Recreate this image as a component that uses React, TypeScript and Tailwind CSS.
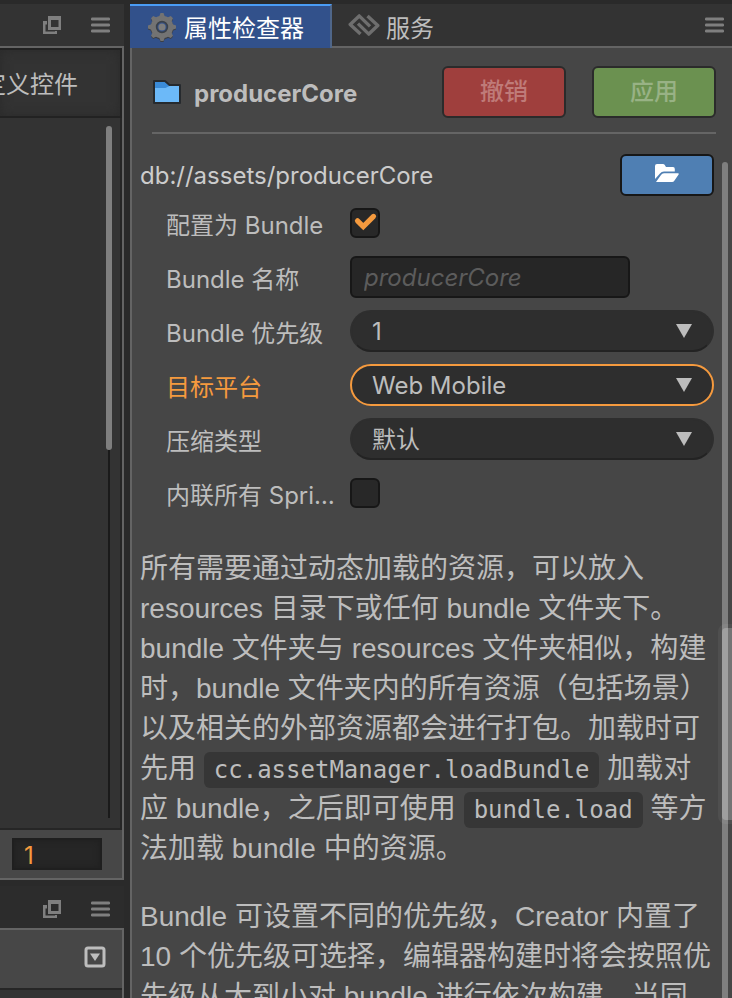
import { useState } from "react";
import type { ReactNode } from "react";

const PRIORITIES = ["1", "2", "3", "4", "5", "6", "7", "8", "9", "10"];
const PLATFORMS = ["Web Mobile", "Web Desktop", "Android", "iOS"];
const COMPRESSION = ["默认", "无压缩", "合并依赖", "Zip"];

export default function App() {
  return (
    <div className="flex h-screen overflow-hidden bg-[#2a2a2a] pt-1 font-['Inter','Noto_Sans_CJK_SC',sans-serif] text-2xl text-[#bdbdbd]">
      <LeftColumn />
      <Inspector />
    </div>
  );
}

function LeftColumn() {
  const [count, setCount] = useState("1");

  return (
    <aside className="mr-1.5 flex w-[124px] shrink-0 flex-col gap-1.5">
      <section className="flex min-h-0 flex-1 flex-col">
        <PanelBar />
        <div className="flex min-h-0 flex-1 flex-col border-r-2 border-b-2 border-[#646464] bg-[#333]">
          <div className="flex h-[70px] shrink-0 items-center justify-end overflow-hidden border-2 border-l-0 border-[#222] pt-1 pr-[42px] whitespace-nowrap shadow-[inset_0_0_12px_#2a2a2a]">
            自定义控件
          </div>
          <div className="flex min-h-0 flex-1 justify-end border-r-2 border-b-2 border-[#262626] pt-2 pr-2 pb-2.5">
            <div className="flex w-1.5 flex-col items-center">
              <div className="h-[324px] w-1.5 shrink-0 rounded-sm bg-[#7f7f7f]" />
              <div className="w-0.5 flex-1 bg-[#1a1a1a]" />
            </div>
          </div>
          <div className="flex h-12 shrink-0 items-center bg-[#474747] px-3">
            <input
              aria-label="数量"
              value={count}
              onChange={(e) => setCount(e.target.value)}
              className="h-8 w-[90px] border-2 border-[#1f1f1f] bg-[#262626] px-2.5 pt-1 text-[#f59a3e] shadow-[inset_0_0_6px_#1f1f1f] outline-none"
            />
          </div>
        </div>
      </section>

      <section className="flex h-28 shrink-0 flex-col">
        <PanelBar dark />
        <div className="flex flex-1 flex-col border-r-2 border-[#646464] bg-[#333]">
          <div className="flex h-[60px] shrink-0 items-center justify-end border-b-2 border-[#262626] bg-[#474747] pr-4 pb-1">
            <button aria-label="展开">
              <DropIcon />
            </button>
          </div>
        </div>
      </section>
    </aside>
  );
}

function PanelBar({ dark = false }: { dark?: boolean }) {
  return (
    <div
      className={`flex h-11 shrink-0 items-center justify-end gap-[30px] border-b-2 border-[#646464] pr-3.5 ${
        dark ? "bg-[#2c2c2c] pt-1" : "bg-[#333]"
      }`}
    >
      <button aria-label="弹出">
        <PopupIcon />
      </button>
      <button aria-label="菜单">
        <MenuIcon />
      </button>
    </div>
  );
}

function Inspector() {
  const [isBundle, setIsBundle] = useState(true);
  const [name, setName] = useState("");
  const [priority, setPriority] = useState("1");
  const [platform, setPlatform] = useState("Web Mobile");
  const [compression, setCompression] = useState("默认");
  const [inlineFrames, setInlineFrames] = useState(false);

  return (
    <main className="relative flex min-w-0 flex-1 flex-col bg-[#464646]">
      <nav className="flex h-11 shrink-0 bg-[#333]">
        <button className="flex h-11 items-center gap-2 border-t-2 border-r-2 border-t-[#4a9cf5] border-r-[#4f6689] bg-[#32518b] pr-[26px] pl-[18px] text-white">
          <GearIcon />
          <span className="pt-1">属性检查器</span>
        </button>
        <div className="flex flex-1 items-center border-b-2 border-[#646464] pr-2 pl-4">
          <button className="flex items-center gap-1.5">
            <ServiceIcon />
            <span className="pt-2">服务</span>
          </button>
          <button aria-label="菜单" className="ml-auto">
            <MenuIcon />
          </button>
        </div>
      </nav>

      <div className="flex min-h-0 flex-1 flex-col border-l-2 border-[#646464]">
        <header className="mr-4 ml-5 flex h-[86px] shrink-0 items-center border-b-2 border-[#656565] pt-1">
          <FolderIcon />
          <h1 className="ml-3 flex-1 pt-1 font-bold">producerCore</h1>
          <button
            disabled
            className="mr-[26px] h-[52px] w-[124px] rounded-md border-2 border-[#2b2b2b] bg-[#9f3f3d] font-medium text-[#bf7b79]"
          >
            撤销
          </button>
          <button
            disabled
            className="h-[52px] w-[124px] rounded-md border-2 border-[#2b2b2b] bg-[#6b9150] font-medium text-[#98b285]"
          >
            应用
          </button>
        </header>

        <div className="min-h-0 flex-1 overflow-hidden pt-5 pr-[18px] pl-2">
          <div className="flex h-[42px] items-center justify-between">
            <span className="pt-0.5 text-[#cccccc]">db://assets/producerCore</span>
            <button
              aria-label="打开文件夹"
              className="flex h-[42px] w-[94px] items-center justify-center rounded-md border-2 border-[#171717] bg-[#4f7fb3] pb-1"
            >
              <FolderOpenIcon />
            </button>
          </div>

          <form>
            <Row id="is-bundle" label="配置为 Bundle">
              <Checkbox id="is-bundle" checked={isBundle} onChange={setIsBundle} />
            </Row>
            <Row id="bundle-name" label="Bundle 名称">
              <input
                id="bundle-name"
                value={name}
                onChange={(e) => setName(e.target.value)}
                placeholder="producerCore"
                className="h-[42px] w-[280px] rounded-md border-2 border-[#171717] bg-[#262626] px-3 outline-none placeholder:text-[#5c5c5c] placeholder:italic"
              />
            </Row>
            <Row id="priority" label="Bundle 优先级">
              <Select id="priority" value={priority} options={PRIORITIES} onChange={setPriority} />
            </Row>
            <Row id="platform" label="目标平台" active>
              <Select id="platform" value={platform} options={PLATFORMS} onChange={setPlatform} active />
            </Row>
            <Row id="compression" label="压缩类型">
              <Select id="compression" value={compression} options={COMPRESSION} onChange={setCompression} />
            </Row>
            <Row id="inline-frames" label="内联所有 SpriteFrame">
              <Checkbox id="inline-frames" checked={inlineFrames} onChange={setInlineFrames} />
            </Row>
          </form>

          <div className="mt-[29px] space-y-7 font-['Liberation_Sans','Noto_Sans_CJK_SC',sans-serif] text-[28px] leading-10">
            <p>
              所有需要通过动态加载的资源，可以放入 resources 目录下或任何 bundle 文件夹下。bundle
              文件夹与 resources 文件夹相似，构建时，bundle
              文件夹内的所有资源（包括场景）以及相关的外部资源都会进行打包。加载时可先用{" "}
              <Code>cc.assetManager.loadBundle</Code> 加载对应 bundle，之后即可使用{" "}
              <Code>bundle.load</Code> 等方法加载 bundle 中的资源。
            </p>
            <p>
              Bundle 可设置不同的优先级，Creator 内置了 10
              个优先级可选择，编辑器构建时将会按照优先级从大到小对 bundle 进行依次构建。当同
            </p>
          </div>
        </div>
      </div>

      {/* scroll thumbs, the window's own one is translucent */}
      <div className="absolute top-[158px] right-1 bottom-0 w-1.5 rounded-t-sm bg-[#7f7f7f]" />
      <div className="absolute top-[620px] right-0 h-[200px] w-3.5 rounded-l-lg border-4 border-r-0 border-white/5 bg-white/25 bg-clip-padding" />
    </main>
  );
}

interface RowProps {
  id: string;
  label: string;
  active?: boolean;
  children: ReactNode;
}

function Row({ id, label, active = false, children }: RowProps) {
  return (
    <div className="flex h-[54px] items-center pl-[26px]">
      <label
        htmlFor={id}
        className={`w-[184px] shrink-0 truncate pt-1.5 pr-3 ${active ? "text-[#f59a3e]" : ""}`}
      >
        {label}
      </label>
      {children}
    </div>
  );
}

interface SelectProps {
  id: string;
  value: string;
  options: string[];
  onChange: (value: string) => void;
  active?: boolean;
}

function Select({ id, value, options, onChange, active = false }: SelectProps) {
  return (
    <div className="relative min-w-0 flex-1">
      <select
        id={id}
        value={value}
        onChange={(e) => onChange(e.target.value)}
        className={`block h-[42px] w-full appearance-none rounded-full border-2 bg-[#2e2e2e] pt-0.5 pr-12 pl-5 outline-none ${
          active ? "border-[#f59a3e]" : "border-[#2e2e2e] border-b-[#232323]"
        }`}
      >
        {options.map((o) => (
          <option key={o} value={o}>{o}</option>
        ))}
      </select>
      <svg viewBox="0 0 16 14" className="pointer-events-none absolute top-3.5 right-[22px] h-3.5 w-4">
        <path d="M0 0h16L8 14z" fill="#bdbdbd" />
      </svg>
    </div>
  );
}

interface CheckboxProps {
  id: string;
  checked: boolean;
  onChange: (checked: boolean) => void;
}

function Checkbox({ id, checked, onChange }: CheckboxProps) {
  return (
    <div className="relative size-[30px]">
      <input
        id={id}
        type="checkbox"
        checked={checked}
        onChange={(e) => onChange(e.target.checked)}
        className="block size-[30px] appearance-none rounded-md border-2 border-[#171717] bg-[#282828]"
      />
      {checked && (
        <svg viewBox="0 0 30 30" fill="none" className="pointer-events-none absolute inset-0">
          <path d="M7.5 12.8l5.8 5.8L23.5 8.4" stroke="#f59a3e" strokeWidth="5.2" strokeLinecap="round" />
        </svg>
      )}
    </div>
  );
}

function Code({ children }: { children: ReactNode }) {
  return (
    <code className="rounded-md bg-[#363636] px-2.5 py-1 font-['DejaVu_Sans_Mono',monospace] text-2xl">
      {children}
    </code>
  );
}

function MenuIcon() {
  return (
    <svg viewBox="0 0 19 16" className="h-4 w-[19px]" fill="#7f7f7f">
      <rect y="0.5" width="19" height="3" rx="1.2" />
      <rect y="6.5" width="19" height="3" rx="1.2" />
      <rect y="12.5" width="19" height="3" rx="1.2" />
    </svg>
  );
}

function PopupIcon() {
  return (
    <svg viewBox="0 0 18 18" className="size-[18px]" fill="#7f7f7f">
      <path fillRule="evenodd" d="M5 0h13v14H5zM8 4v7h7.5V4z" />
      <path d="M0 5h4v3.5H2.5v7H12V15h2v3H0z" />
    </svg>
  );
}

function DropIcon() {
  return (
    <svg viewBox="0 0 22 22" className="size-[22px]" fill="none">
      <rect x="2" y="2" width="18" height="18" rx="2" stroke="#bdbdbd" strokeWidth="3" />
      <path d="M6 7.5h10l-5 7.5z" fill="#bdbdbd" />
    </svg>
  );
}

function GearIcon() {
  return (
    <svg viewBox="0 0 28 30" className="h-[30px] w-7">
      <g transform="translate(14 15)">
        <g fill="#3c3f45" transform="translate(0 1)">
          <circle r="11.5" />
          <path d="M-3-10L-1.5-14h3L3-10zM-3 10L-1.5 14h3L3 10zM-10-3l-4 1.5v3l4 1.5zM10-3l4 1.5v3L10 3z" />
          <path d="M-3-10L-1.5-14h3L3-10zM-3 10L-1.5 14h3L3 10zM-10-3l-4 1.5v3l4 1.5zM10-3l4 1.5v3L10 3z" transform="rotate(45)" />
        </g>
        <g fill="#737373">
          <circle r="11.2" />
          <path d="M-3-10L-1.5-14h3L3-10zM-3 10L-1.5 14h3L3 10zM-10-3l-4 1.5v3l4 1.5zM10-3l4 1.5v3L10 3z" />
          <path d="M-3-10L-1.5-14h3L3-10zM-3 10L-1.5 14h3L3 10zM-10-3l-4 1.5v3l4 1.5zM10-3l4 1.5v3L10 3z" transform="rotate(45)" />
        </g>
        <circle r="5.4" fill="#32518b" stroke="#3b4149" strokeWidth="1.6" />
        <circle r="3.6" fill="#7d7d7d" />
      </g>
    </svg>
  );
}

function ServiceIcon() {
  return (
    <svg viewBox="0 0 32 24" className="h-6 w-8" fill="none" stroke="#6e6e6e" strokeWidth="3.4" strokeLinejoin="round">
      <path d="M12.5 21L2.2 11.5l9-8.6L22 13.4" />
      <path d="M19.5 3l10.3 9.5-9 8.600L10 10.600" />
    </svg>
  );
}

function FolderIcon() {
  return (
    <svg viewBox="0 0 30 26" className="h-[26px] w-[30px]" stroke="#262a2e" strokeWidth="2">
      <path d="M2 2h11l4.5 4H28v18H2z" fill="#3a8bd8" strokeLinejoin="round" />
      <path d="M3 9h10.5l4-2H27v16H3z" fill="#6cb9f8" stroke="none" />
    </svg>
  );
}

function FolderOpenIcon() {
  return (
    <svg viewBox="0 0 24 18" className="h-[18px] w-6" fill="#fff">
      <path d="M0 15V2Q0 0 2 0h6q1 0 1.6.8L11 3h7q1.8 0 1.8 2v2.500H9q-2.500 0-4 2z" />
      <path d="M1 18l5-7q1-1.800 3-1.800h14q1.400 0 .6 1.200L19.500 16.500q-1 1.500-2.500 1.500z" />
    </svg>
  );
}
